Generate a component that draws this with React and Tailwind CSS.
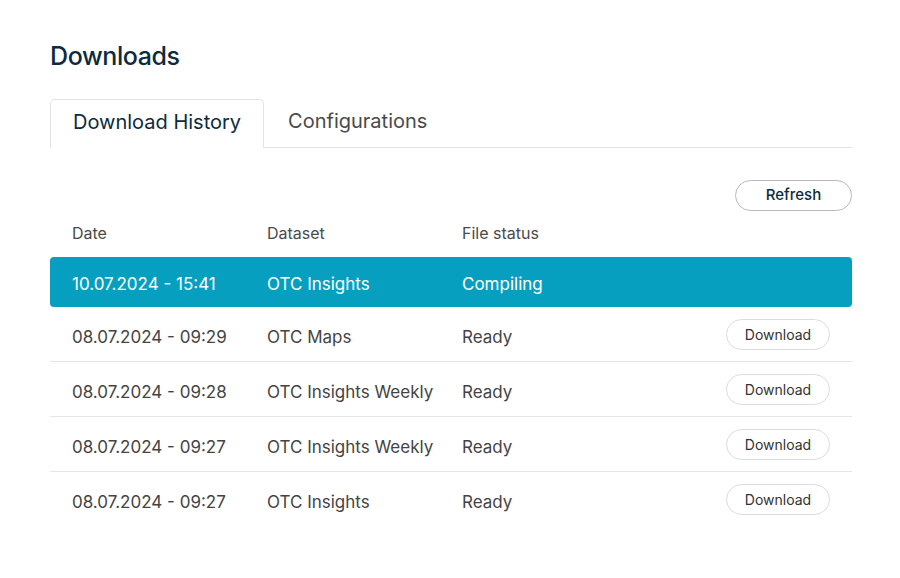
const rows = [
  { date: '08.07.2024 - 09:29', dataset: 'OTC Maps', status: 'Ready' },
  { date: '08.07.2024 - 09:28', dataset: 'OTC Insights Weekly', status: 'Ready' },
  { date: '08.07.2024 - 09:27', dataset: 'OTC Insights Weekly', status: 'Ready' },
  { date: '08.07.2024 - 09:27', dataset: 'OTC Insights', status: 'Ready' },
];

export default function App() {
  return (
    <div className="w-[900px] h-[578px] bg-white pl-[50px] pr-[48px] pt-[40px] font-['Inter',sans-serif] antialiased">
      <h1 className="text-[25px] leading-[32px] font-medium text-[#0c2b3d] tracking-[-0.4px]">Downloads</h1>

      <div className="mt-[27px] flex border-b border-[#e3e3e3]">
        <div className="h-[49px] -mb-px pb-[4px] px-[22px] flex items-center rounded-t-[5px] border border-b-0 border-[#e3e3e3] bg-white text-[20px] text-[#0c2b3d]">
          Download History
        </div>
        <div className="h-[48px] pb-[4px] px-[24px] flex items-center text-[20px] text-[#4a4a4a]">
          Configurations
        </div>
      </div>

      <div className="mt-[32px] flex justify-end">
        <button className="w-[117px] h-[31px] rounded-full border border-[#b9b9b9] text-[15px] font-medium text-[#0c2b3d]">
          Refresh
        </button>
      </div>

      <div className="h-[46px] pb-[2px] flex items-center px-[22px] text-[16px] text-[#4a4a4a]">
        <div className="w-[195px]">Date</div>
        <div className="w-[195px]">Dataset</div>
        <div>File status</div>
      </div>

      <div className="h-[50px] flex items-center pt-[5px] px-[22px] rounded-[4px] bg-[#079fbf] text-[17px] text-white">
        <div className="w-[195px]">10.07.2024 - 15:41</div>
        <div className="w-[195px]">OTC Insights</div>
        <div>Compiling</div>
      </div>

      {rows.map((r, i) => (
        <div
          key={i}
          className={`h-[55px] flex items-center px-[22px] text-[17px] text-[#444] ${i < rows.length - 1 ? 'border-b border-[#e6e6e6]' : ''}`}
        >
          <div className="w-[195px] pt-[7px]">{r.date}</div>
          <div className="w-[195px] pt-[7px]">{r.dataset}</div>
          <div className="flex-1 pt-[7px]">{r.status}</div>
          <button className="w-[104px] h-[31px] rounded-full border border-[#dcdcdc] text-[14px] text-[#333]">
            Download
          </button>
        </div>
      ))}
    </div>
  );
}
